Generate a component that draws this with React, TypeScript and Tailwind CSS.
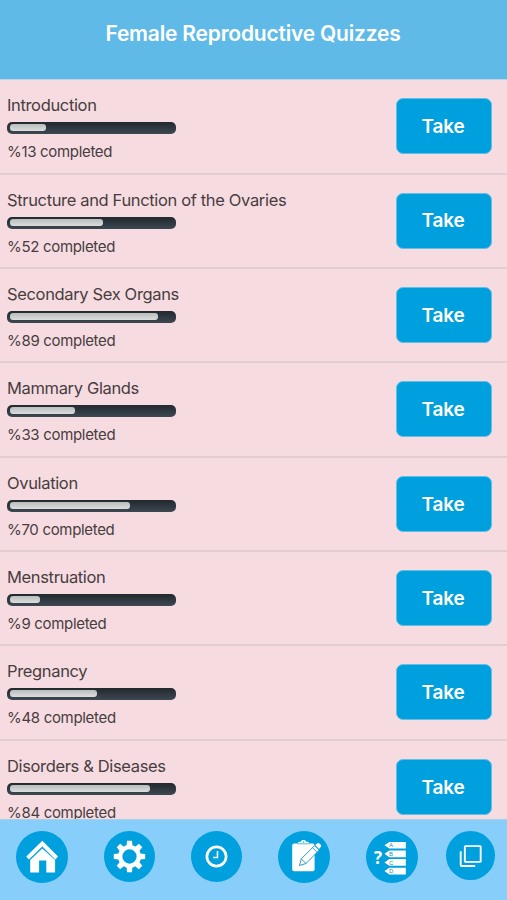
import React from 'react';

interface Quiz {
  title: string;
  percent: number;
}

const quizzes: Quiz[] = [
  { title: 'Introduction', percent: 13 },
  { title: 'Structure and Function of the Ovaries', percent: 52 },
  { title: 'Secondary Sex Organs', percent: 89 },
  { title: 'Mammary Glands', percent: 33 },
  { title: 'Ovulation', percent: 70 },
  { title: 'Menstruation', percent: 9 },
  { title: 'Pregnancy', percent: 48 },
  { title: 'Disorders & Diseases', percent: 84 },
];

const ProgressBar: React.FC<{ percent: number }> = ({ percent }) => (
  <div className="h-3 w-[169px] rounded-[5px] bg-linear-to-b from-[#22292e] to-[#3d4852] py-[2px] pl-[3px]">
    {/* The fill never gets shorter than its rounded caps */}
    <div
      className="h-[7px] rounded-[3px] bg-linear-to-b from-[#b9bdbc] to-[#dcdede]"
      style={{ width: `${16.5 + percent * 1.474}px` }}
    />
  </div>
);

const QuizRow: React.FC<{ quiz: Quiz }> = ({ quiz }) => (
  <li className="flex h-[94.35px] shrink-0 items-start justify-between border-b-2 border-[#e2cdd2] pl-[7px] pr-[15px]">
    <div className="pt-[13px] text-[#483c40]">
      <h2 className="text-[16.5px] leading-6 tracking-[-0.35px]">{quiz.title}</h2>
      <div className="mt-[5px]">
        <ProgressBar percent={quiz.percent} />
      </div>
      <p className="mt-2 text-[15px] leading-5 tracking-[-0.32px]">%{quiz.percent} completed</p>
    </div>
    <button className="mt-[18px] h-14 w-24 rounded-[7px] border border-[#62bfe6] bg-[#00a0de] pr-[2px] pt-[2px] text-[19px] font-semibold tracking-[-0.2px] text-white">
      Take
    </button>
  </li>
);

const HomeIcon = () => (
  <svg viewBox="0 0 52 52" className="size-full" fill="#fff">
    <path d="M26.3 9.7 10.3 25.4l2.6 3L26.3 15.6 39.4 28.4l2.6-3z" />
    <path d="M26.3 17.4 14.2 29v12.4h8.9V29.5h7.2v11.9h8.8V29z" />
  </svg>
);

const GearIcon = () => (
  <svg viewBox="0 0 52 52" className="size-full" fill="#fff">
    {[0, 45, 90, 135, 180, 225, 270, 315].map((angle) => (
      <path key={angle} d="M22.9 16l.6-6h5l.6 6z" transform={`rotate(${angle} 26 26)`} />
    ))}
    <circle cx="26" cy="26" r="9.5" fill="none" stroke="#fff" strokeWidth="4.4" />
  </svg>
);

const ClockIcon = () => (
  <svg viewBox="0 0 52 52" className="size-full" fill="none" stroke="#fff">
    <circle cx="26" cy="26" r="9.8" strokeWidth="2.7" />
    <path d="M27 20.5V27h-4.5" strokeWidth="1.6" />
  </svg>
);

const ClipboardIcon = () => (
  <svg viewBox="0 0 52 52" className="size-full" fill="#fff">
    <path d="M16.2 12.4h3.5c.3-1.2 1.4-1.6 3-1.6.4-1.2 1.3-1.7 2.8-1.7s2.4.5 2.8 1.7c1.6 0 2.7.4 3 1.6h3.3a2 2 0 0 1 2 2v23.9a2 2 0 0 1-2 2H16.2a2 2 0 0 1-2-2V14.4a2 2 0 0 1 2-2z" />
    <path d="M19.5 12.8h12" stroke="#00a0de" strokeWidth=".7" />
    <circle cx="25.5" cy="10.9" r=".6" fill="#00a0de" />
    <g stroke="#168fc4" strokeWidth=".9" strokeLinejoin="round">
      <path d="m21.5 34.5 1.8-6.7 13.4-13.3 4.6 4.6L28 32.5z" />
      <path d="m23.3 27.8 4.7 4.7" fill="none" />
    </g>
    <path d="m34.5 16.6 4.5 4.6M36.7 13.9l4.9 4.8" stroke="#00a0de" strokeWidth=".8" />
    <path d="m37.2 14 2.2-1.8q1-.7 2 .2l1.4 1.3q1 1 .1 2l-1.9 2.4z" />
  </svg>
);

const AnswersIcon = () => (
  <svg viewBox="0 0 52 52" className="size-full" fill="#fff">
    <text x="8" y="32.5" fontFamily="Open Sans, sans-serif" fontSize="17" fontWeight="700">?</text>
    {['A', 'B', 'C', 'D'].map((letter, i) => (
      <g key={letter} transform={`translate(0 ${i * 8.6})`}>
        <path d="M18.5 14.2 23.3 10.9H39.8v6.7H23.3z" />
        <text x="23" y="16.4" fontFamily="Liberation Sans, sans-serif" fontSize="6" fill="#168fc4">{letter}</text>
      </g>
    ))}
  </svg>
);

const CopyIcon = () => (
  <svg viewBox="0 0 52 52" className="size-full" fill="none" stroke="#fff" strokeWidth="2">
    <rect x="20" y="16" width="16.8" height="16.8" rx=".6" />
    <path d="M15.6 21.5v14.7a1 1 0 0 0 1 1H31" />
  </svg>
);

const tabs = [
  { label: 'Home', icon: HomeIcon, size: 'size-[52px]' },
  { label: 'Settings', icon: GearIcon, size: 'size-[51px]' },
  { label: 'Timer', icon: ClockIcon, size: 'size-[51px]' },
  { label: 'Notes', icon: ClipboardIcon, size: 'size-[52px]' },
  { label: 'Quizzes', icon: AnswersIcon, size: 'size-[52px]' },
  { label: 'Cards', icon: CopyIcon, size: 'size-[49px] -ml-2' },
];

const TabBar: React.FC = () => (
  <nav className="flex h-[81px] shrink-0 gap-9 border-t border-[#a9cee8] bg-[#87cefa] pl-4 pt-[11.4px]">
    {tabs.map(({ label, icon: Icon, size }) => (
      <button key={label} aria-label={label} className={`${size} shrink-0 rounded-full bg-[#00a0de]`}>
        <Icon />
      </button>
    ))}
  </nav>
);

const App: React.FC = () => {
  return (
    <div className="flex h-[900px] w-[507px] flex-col overflow-hidden bg-[#f6dce0] font-['Inter',sans-serif]">
      <header className="h-20 shrink-0 border-b border-[#bcd4e8] bg-[#60bae8] pr-px pt-5 text-center">
        <h1 className="text-[21px] font-semibold leading-7 tracking-[-0.2px] text-white">Female Reproductive Quizzes</h1>
      </header>
      <ul className="flex min-h-0 flex-1 flex-col overflow-hidden pt-[0.4px]">
        {quizzes.map((quiz) => (
          <QuizRow key={quiz.title} quiz={quiz} />
        ))}
      </ul>
      <TabBar />
    </div>
  );
};

export default App;
